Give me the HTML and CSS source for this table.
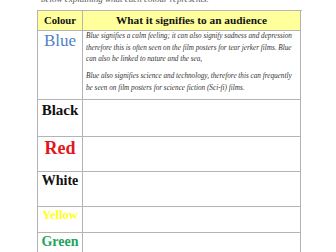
FILE: index.html
```html
<!DOCTYPE html>
<html>
<head>
<meta charset="utf-8">
<link rel="stylesheet" href="styles.css">
</head>
<body>
<p class="intro">below explaining what each colour represents.</p>
<div class="sheet">
  <div class="cell head">Colour</div>
  <div class="cell head">What it signifies to an audience</div>

  <div class="cell label blue">Blue</div>
  <div class="cell desc">
    <p>Blue signifies a calm feeling; it can also signify sadness and depression<br>therefore this is often seen on the film posters for tear jerker films. Blue<br>can also be linked to nature and the sea,</p>
    <p>Blue also signifies science and technology, therefore this can frequently<br>be seen on film posters for science fiction (Sci-fi) films.</p>
  </div>

  <div class="cell label black">Black</div>
  <div class="cell"></div>

  <div class="cell label red">Red</div>
  <div class="cell"></div>

  <div class="cell label white">White</div>
  <div class="cell"></div>

  <div class="cell label yellow">Yellow</div>
  <div class="cell"></div>

  <div class="cell label green">Green</div>
  <div class="cell"></div>
</div>
</body>
</html>
```
FILE: styles.css
```css
html, body {
  margin: 0;
  padding: 0;
  background: #fff;
  overflow: hidden;
}
body {
  font-family: "Liberation Serif", "DejaVu Serif", serif;
  color: #222;
}
.intro {
  margin: -6px 0 0 41px;
  height: 10px;
  font-size: 9px;
  line-height: 10px;
  font-style: italic;
  color: #555;
}
.sheet {
  margin: 6px 0 0 37px;
  width: 264px;
  display: grid;
  grid-template-columns: 45px 218px;
  grid-template-rows: 20px 69px 37px 35px 35px 26px 30px;
  border-left: 1px solid #b4b4b4;
  border-top: 1px solid #b4b4b4;
}
.cell {
  box-sizing: border-box;
  border-right: 1px solid #b4b4b4;
  border-bottom: 1px solid #b4b4b4;
}
.head {
  background: #ffff9c;
  font-weight: bold;
  text-align: center;
  font-size: 11.3px;
  line-height: 18px;
  color: #111;
}
.head:first-child {
  font-size: 10.7px;
}
.label {
  text-align: center;
  font-weight: bold;
  line-height: 1;
}
.blue {
  color: #4f81c7;
  font-weight: normal;
  font-size: 17px;
  padding-top: 1px;
}
.black {
  color: #111;
  font-size: 15px;
  padding-top: 3px;
}
.red {
  color: #e3161b;
  font-size: 18px;
  padding-top: 2px;
}
.white {
  color: #111;
  font-size: 14px;
  padding-top: 2px;
}
.yellow {
  color: #ffff1a;
  font-size: 12.5px;
  padding-top: 2px;
}
.green {
  color: #1fa35c;
  font-size: 14px;
  padding-top: 2px;
}
.desc {
  padding-left: 3px;
  font-style: italic;
  font-size: 7.2px;
  line-height: 11.5px;
  color: #333;
  white-space: nowrap;
}
.desc p {
  margin: 0 0 5.5px 0;
}
```
